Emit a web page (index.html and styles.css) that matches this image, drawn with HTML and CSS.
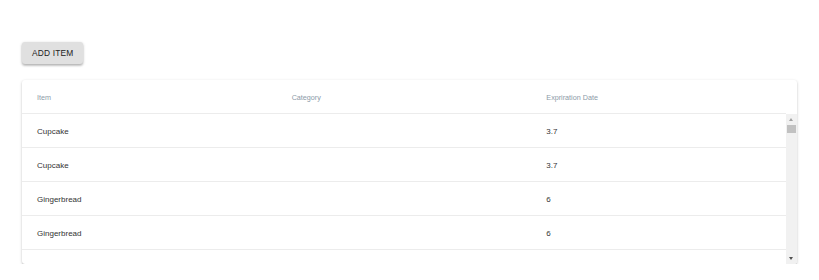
FILE: index.html
```html
<!DOCTYPE html>
<html lang="en">
<head>
  <meta charset="UTF-8" />
  <title>Inventory</title>
  <link rel="stylesheet" href="styles.css">
</head>
<body>
  <div class="page">
    <button class="add-btn">Add Item</button>

    <div class="card">
      <div class="row head">
        <div class="cell">Item</div>
        <div class="cell">Category</div>
        <div class="cell">Expriration Date</div>
      </div>
      <div class="body">
        <div class="rows">
          <div class="row">
            <div class="cell">Cupcake</div>
            <div class="cell"></div>
            <div class="cell">3.7</div>
          </div>
          <div class="row">
            <div class="cell">Cupcake</div>
            <div class="cell"></div>
            <div class="cell">3.7</div>
          </div>
          <div class="row">
            <div class="cell">Gingerbread</div>
            <div class="cell"></div>
            <div class="cell">6</div>
          </div>
          <div class="row">
            <div class="cell">Gingerbread</div>
            <div class="cell"></div>
            <div class="cell">6</div>
          </div>
          <div class="row"></div>
        </div>
        <div class="scrollbar">
          <div class="arrow up"></div>
          <div class="thumb"></div>
          <div class="track"></div>
          <div class="arrow down"></div>
        </div>
      </div>
    </div>
  </div>
</body>
</html>
```

FILE: styles.css
```css
* {
  margin: 0;
  padding: 0;
  box-sizing: border-box;
  font-family: 'Liberation Sans', Arial, sans-serif;
}
body {
  background: #fff;
}
.page {
  padding: 42px 22px 0;
  display: flex;
  flex-direction: column;
  align-items: flex-start;
  gap: 16px;
}
.add-btn {
  height: 22px;
  padding: 0 10px;
  border: none;
  border-radius: 3px;
  background: #e0e0e0;
  color: #222;
  font-size: 8.4px;
  letter-spacing: 0.02em;
  text-transform: uppercase;
  box-shadow: 0 1px 3px rgba(0,0,0,0.25), 0 2px 2px rgba(0,0,0,0.12);
}
.card {
  width: 100%;
  height: 184px;
  border-radius: 3px;
  background: #fff;
  box-shadow: 0 1px 3px rgba(0,0,0,0.22), 0 1px 1px rgba(0,0,0,0.1);
  overflow: hidden;
  display: flex;
  flex-direction: column;
}
.row {
  display: flex;
  height: 34px;
  flex-shrink: 0;
  align-items: center;
  border-bottom: 1px solid #ececec;
  font-size: 8px;
  color: #333;
}
.row.head {
  font-size: 7.2px;
  color: #8c9aa8;
  margin-right: 11px;
}
.cell {
  flex: 1;
  padding-left: 15px;
  padding-top: 1px;
}
.body {
  flex: 1;
  display: flex;
  min-height: 0;
}
.rows {
  flex: 1;
  overflow: hidden;
}
.scrollbar {
  width: 11px;
  background: #f1f1f1;
  display: flex;
  flex-direction: column;
  align-items: center;
}
.arrow {
  height: 11px;
  width: 100%;
  position: relative;
}
.arrow::after {
  content: '';
  position: absolute;
  left: 3px;
  width: 0;
  height: 0;
  border-left: 2.5px solid transparent;
  border-right: 2.5px solid transparent;
}
.arrow.up::after {
  top: 4px;
  border-bottom: 3px solid #a3a3a3;
}
.arrow.down::after {
  top: 4px;
  border-top: 3px solid #505050;
}
.thumb {
  width: 9px;
  height: 8px;
  background: #c1c1c1;
}
.track {
  flex: 1;
}
```
